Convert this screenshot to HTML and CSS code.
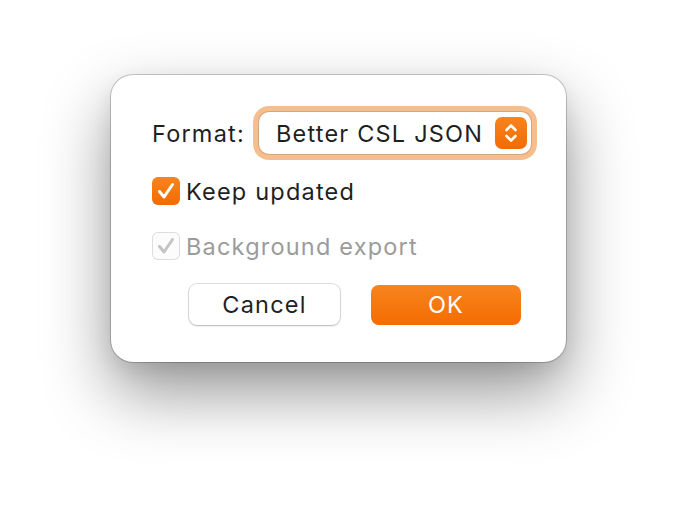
FILE: index.html
```html
<!DOCTYPE html>
<html>
<head>
<meta charset="utf-8">
<link rel="stylesheet" href="styles.css">
</head>
<body>
<div class="dialog">
  <div class="row format-row">
    <span class="label">Format:</span>
    <div class="select">
      <span class="select-text">Better CSL JSON</span>
      <span class="stepper">
        <svg width="32" height="32" viewBox="0 0 32 32"><path d="M11.5 13 L16 8.5 L20.5 13 M11.5 19 L16 23.5 L20.5 19" fill="none" stroke="#fff" stroke-width="2.6" stroke-linecap="round" stroke-linejoin="round"/></svg>
      </span>
    </div>
  </div>
  <label class="row check-row">
    <span class="checkbox on"><svg width="28" height="28" viewBox="0 0 28 28"><path d="M7.5 14.5 L12 20 L20.5 7.5" fill="none" stroke="#fff" stroke-width="3" stroke-linecap="round" stroke-linejoin="round"/></svg></span>
    <span class="check-label">Keep updated</span>
  </label>
  <label class="row check-row disabled">
    <span class="checkbox off"><svg width="28" height="28" viewBox="0 0 28 28"><path d="M7.5 14.5 L12 20 L20.5 7.5" fill="none" stroke="#c4c4c4" stroke-width="3" stroke-linecap="round" stroke-linejoin="round"/></svg></span>
    <span class="check-label">Background export</span>
  </label>
  <div class="row button-row">
    <button class="btn cancel">Cancel</button>
    <button class="btn ok">OK</button>
  </div>
</div>
</body>
</html>
```
FILE: styles.css
```css
html, body {
  margin: 0;
  padding: 0;
  background: #ffffff;
}
body {
  width: 678px;
  height: 510px;
  font-family: Inter, "Noto Sans", sans-serif;
  color: #1f1f1f;
}
.dialog {
  box-sizing: border-box;
  margin: 75px 0 0 111px;
  width: 455px;
  height: 287px;
  background: #ffffff;
  border-radius: 22px;
  box-shadow: 0 0 0 1px rgba(0,0,0,0.2), 0 30px 66px rgba(0,0,0,0.42), 0 8px 20px rgba(0,0,0,0.08);
  padding: 32px 0 0 41px;
  display: flex;
  flex-direction: column;
}
.row {
  display: flex;
  align-items: center;
}
.format-row {
  height: 52px;
}
.label {
  font-size: 23.5px;
  letter-spacing: 1.2px;
  width: 101px;
}
.select {
  box-sizing: border-box;
  width: 272px;
  height: 42px;
  margin-left: 6px;
  border-radius: 10px;
  background: #fff;
  box-shadow: 0 0 0 1px rgba(0,0,0,0.12), 0 0 0 6px rgba(240,150,70,0.62);
  display: flex;
  align-items: center;
  padding-left: 17px;
}
.select-text {
  font-size: 23.5px;
  letter-spacing: 1.2px;
  flex: 1;
}
.stepper {
  width: 32px;
  height: 32px;
  border-radius: 7px;
  background: linear-gradient(#f7841f, #f36b00);
  margin-right: 4px;
  display: flex;
}
.check-row {
  height: 28px;
  margin-top: 18px;
}
.check-row.disabled {
  margin-top: 27px;
}
.checkbox {
  box-sizing: border-box;
  width: 28px;
  height: 28px;
  border-radius: 6px;
  display: flex;
}
.checkbox.on {
  background: linear-gradient(#f7841f, #f36b00);
}
.checkbox.off {
  background: #fcfcfc;
  box-shadow: inset 0 0 0 1px #dedede;
}
.check-label {
  font-size: 23.5px;
  letter-spacing: 1.2px;
  margin-left: 6px;
}
.disabled .check-label {
  color: #9b9b9b;
}
.button-row {
  margin-top: 24px;
  padding-left: 37px;
  gap: 31px;
}
.btn {
  font-family: Inter, "Noto Sans", sans-serif;
  font-size: 23.5px;
  letter-spacing: 1.2px;
  width: 151px;
  height: 41px;
  border: none;
  border-radius: 8px;
  padding: 0;
}
.cancel {
  background: #fff;
  color: #1f1f1f;
  box-shadow: 0 0 0 1px rgba(0,0,0,0.12), 0 1px 2px rgba(0,0,0,0.18);
}
.ok {
  background: linear-gradient(#f7841f, #f56c00);
  color: #fff;
  width: 150px;
  height: 40px;
}
```
